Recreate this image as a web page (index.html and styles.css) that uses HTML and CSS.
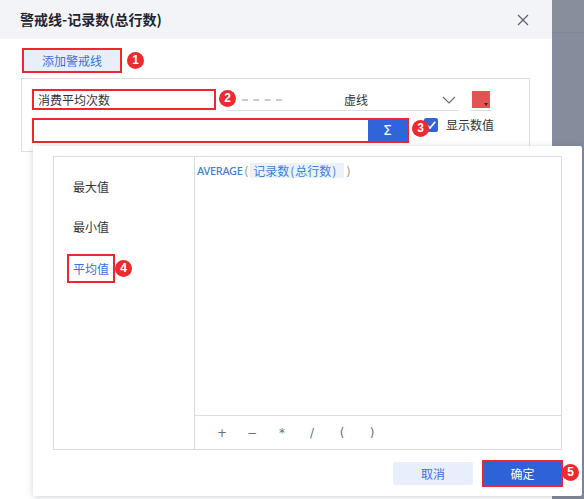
FILE: index.html
```html
<!DOCTYPE html>
<html lang="zh-CN">
<head>
<meta charset="utf-8">
<title>警戒线</title>
<link rel="stylesheet" href="styles.css">
</head>
<body>
<div class="page">
  <div class="dialog">
    <div class="dlg-head">
      <span class="dlg-title">警戒线-记录数(总行数)</span>
      <svg class="close" width="12" height="12" viewBox="0 0 12 12"><path d="M1 1L11 11M11 1L1 11" stroke="#5a5f6a" stroke-width="1.2" fill="none"/></svg>
    </div>
    <div class="dlg-body">
      <div class="add-row">
        <div class="btn-add">添加警戒线<span class="badge b1">1</span></div>
      </div>
      <div class="line-box">
        <div class="row1">
          <div class="name-input">消费平均次数<span class="badge b2">2</span></div>
          <div class="select">
            <span class="dash"></span>
            <span class="select-text">虚线</span>
            <svg class="chev" width="14" height="8" viewBox="0 0 14 8"><path d="M1 1L7 7L13 1" stroke="#6b7080" stroke-width="1.2" fill="none"/></svg>
          </div>
          <div class="swatch-wrap"><div class="swatch"><span class="tri"></span></div></div>
        </div>
        <div class="row2">
          <div class="formula-input"><span class="sigma">Σ</span><span class="badge b3">3</span></div>
          <div class="check">
            <span class="box"><svg width="14" height="14" viewBox="0 0 14 14"><path d="M3 7.2L6 10L11.2 3.8" stroke="#fff" stroke-width="1.6" fill="none"/></svg></span>
            <span class="check-text">显示数值</span>
          </div>
        </div>
      </div>
    </div>
  </div>
  <div class="overlay"><div class="overlay-top"></div></div>

  <div class="popup">
    <div class="editor">
      <div class="fn-list">
        <div class="fn-item">最大值</div>
        <div class="fn-item">最小值</div>
        <div class="fn-item active"><span class="fn-active">平均值<span class="badge b4">4</span></span></div>
      </div>
      <div class="formula">
        <div class="formula-text"><span class="fn-name">AVERAGE</span><span class="paren">(</span><span class="token">记录数<span class="tp">(</span>总行数<span class="tp">)</span></span><span class="paren">)</span></div>
        <div class="ops">
          <span class="op">+</span>
          <span class="op">−</span>
          <span class="op">*</span>
          <span class="op">/</span>
          <span class="op">(</span>
          <span class="op">)</span>
        </div>
      </div>
    </div>
    <div class="actions">
      <div class="btn-cancel">取消</div>
      <div class="btn-ok">确定<span class="badge b5">5</span></div>
    </div>
  </div>
</div>
</body>
</html>
```

FILE: styles.css
```css
* { box-sizing: border-box; }
html, body { margin: 0; padding: 0; }
body {
  font-family: "Noto Sans", "Noto Sans CJK SC", sans-serif;
  font-size: 12px;
  color: #333;
}
.page {
  position: relative;
  display: flex;
  width: 584px;
  height: 499px;
  overflow: hidden;
}
.dialog {
  width: 552px;
  height: 499px;
  background: #fff;
  display: flex;
  flex-direction: column;
}
.dlg-head {
  height: 39px;
  background: #f3f4f7;
  display: flex;
  align-items: center;
  justify-content: space-between;
  padding: 0 23px 0 20px;
}
.dlg-title {
  font-family: "Noto Sans CJK SC", sans-serif;
  font-weight: bold;
  font-size: 14px;
  color: #1f2430;
  line-height: 20px;
  margin-top: -1px;
}
.close { display: block; }
.overlay {
  flex: 1;
  background: #858c9b;
}
.overlay-top {
  height: 33px;
  background: #878e9c;
  border-bottom: 1px solid #7e8594;
}
.dlg-body {
  padding: 9px 0 0 21px;
}
.add-row { display: flex; padding-left: 1px; }
.btn-add {
  position: relative;
  width: 100px;
  height: 25px;
  background: #e8eefb;
  border: 2px solid #f0262c;
  color: #3a6ee2;
  font-family: "Noto Sans CJK SC", sans-serif;
  font-size: 12px;
  line-height: 21px;
  text-align: center;
}
.badge {
  position: absolute;
  width: 17px;
  height: 17px;
  border-radius: 50%;
  background: #ee2a2e;
  color: #fff;
  font-family: "Liberation Sans", sans-serif;
  font-weight: bold;
  font-size: 12px;
  line-height: 17px;
  text-align: center;
  z-index: 2;
}
.b1 { left: 103px; top: 2px; }
.b2 { left: 185px; top: -1px; }
.b3 { left: 378px; top: 0px; }
.b4 { left: 46px; top: 4px; }
.b5 { left: 78px; top: 2px; }

.line-box {
  margin-top: 5px;
  width: 509px;
  height: 74px;
  border: 1px solid #dcdfe6;
  padding: 10px 0 0 10px;
}
.row1 {
  display: flex;
  align-items: flex-start;
  height: 22px;
}
.name-input {
  position: relative;
  width: 184px;
  height: 21px;
  border: 2px solid #f0262c;
  padding-left: 4px;
  font-family: "Noto Sans CJK SC", sans-serif;
  font-size: 12px;
  line-height: 17px;
  color: #333;
}
.select {
  margin-left: 10px;
  width: 233px;
  height: 22px;
  border-bottom: 1px solid #dcdfe6;
  display: flex;
  align-items: center;
}
.dash {
  margin-left: 16px;
  width: 40px;
  height: 0;
  border-top: 2px dashed #c8ccd4;
}
.select-text {
  margin-left: 62px;
  font-family: "Noto Sans CJK SC", sans-serif;
  font-size: 12px;
  line-height: 16px;
  color: #333;
}
.chev { margin-left: auto; margin-right: 3px; }
.swatch-wrap {
  margin-left: 11px;
  width: 22px;
  height: 22px;
  padding: 2px 0 0 2px;
  border-bottom: 1px solid #dcdfe6;
}
.swatch {
  position: relative;
  width: 18px;
  height: 17px;
  background: #e35353;
}
.tri {
  position: absolute;
  right: 2px;
  bottom: 2px;
  width: 0;
  height: 0;
  border-left: 2.5px solid transparent;
  border-right: 2.5px solid transparent;
  border-top: 3px solid #2a2a35;
}
.row2 {
  display: flex;
  align-items: flex-start;
  margin-top: 7px;
}
.formula-input {
  position: relative;
  width: 377px;
  height: 25px;
  border: 2px solid #f0262c;
  display: flex;
  justify-content: flex-end;
}
.sigma {
  width: 39px;
  height: 21px;
  background: #2f65d9;
  color: #fff;
  font-family: "DejaVu Sans", sans-serif;
  font-size: 14px;
  line-height: 21px;
  text-align: center;
}
.check {
  display: flex;
  align-items: center;
  margin-left: 15px;
  height: 14px;
}
.box {
  width: 14px;
  height: 14px;
  border-radius: 2px;
  background: #2f65d9;
  display: block;
}
.box svg { display: block; }
.check-text {
  margin-left: 8px;
  font-family: "Noto Sans CJK SC", sans-serif;
  font-size: 12px;
  line-height: 14px;
  color: #333;
}

/* popup */
.popup {
  position: absolute;
  left: 33px;
  top: 146px;
  width: 549px;
  height: 350px;
  background: #fff;
  border-radius: 2px;
  box-shadow: 0 1px 6px rgba(40, 50, 70, 0.22);
  padding: 10px 20px 0 20px;
  display: flex;
  flex-direction: column;
  z-index: 3;
}
.editor {
  display: flex;
  height: 294px;
}
.fn-list {
  width: 141px;
  border: 1px solid #d8dce4;
  border-right: none;
  padding-top: 10px;
  padding-left: 19px;
}
.fn-item {
  height: 40px;
  line-height: 40px;
  font-family: "Noto Sans CJK SC", sans-serif;
  font-size: 12px;
  color: #333;
}
.fn-active {
  position: relative;
  display: inline-block;
  margin-left: -6px;
  padding: 0 4px;
  height: 29px;
  line-height: 25px;
  border: 2px solid #f0262c;
  color: #3a6ee2;
  vertical-align: middle;
}
.formula {
  flex: 1;
  border: 1px solid #d8dce4;
  display: flex;
  flex-direction: column;
}
.formula-text {
  flex: 1;
  padding: 6px 0 0 2px;
  display: flex;
  align-items: flex-start;
}
.fn-name {
  font-family: "Noto Sans", sans-serif;
  font-size: 11px;
  font-weight: 500;
  color: #3e7fe0;
  line-height: 15px;
  letter-spacing: -0.3px;
}
.paren {
  color: #a4a48c;
  font-size: 12px;
  line-height: 15px;
  padding: 0 2px 0 2px;
}
.token {
  background: #e9f2fd;
  color: #3e7fe0;
  font-family: "Noto Sans CJK SC", sans-serif;
  font-size: 12px;
  line-height: 15px;
  padding: 0 7px 0 3px;
}
.tp { padding: 0 1px; }
.ops {
  height: 34px;
  border-top: 1px solid #d8dce4;
  display: flex;
  align-items: center;
  padding-left: 12px;
}
.op {
  width: 30px;
  text-align: center;
  color: #6b6f78;
  font-family: "DejaVu Sans", sans-serif;
  font-size: 12px;
}
.actions {
  display: flex;
  justify-content: flex-end;
  align-items: center;
  gap: 9px;
  margin-top: 10px;
  margin-right: -1px;
}
.btn-cancel {
  width: 80px;
  height: 23px;
  background: #e8eefb;
  color: #3a6ee2;
  font-family: "Noto Sans CJK SC", sans-serif;
  font-size: 12px;
  line-height: 23px;
  text-align: center;
  border-radius: 2px;
}
.btn-ok {
  position: relative;
  width: 81px;
  height: 27px;
  background: #2d62d9;
  border: 2px solid #f0262c;
  color: #fff;
  font-family: "Noto Sans CJK SC", sans-serif;
  font-size: 12px;
  line-height: 23px;
  text-align: center;
}
```
